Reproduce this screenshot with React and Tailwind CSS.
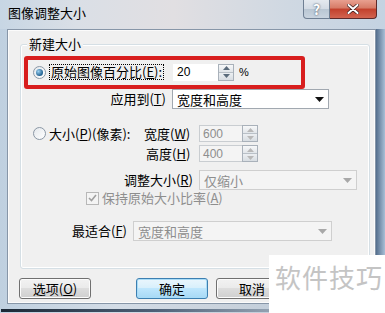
import React from "react";

const font = { fontFamily: '"Noto Sans CJK SC", "Liberation Sans", sans-serif' };

function Spinner({ disabled }) {
  const tri = disabled ? "#b8b8b8" : "#5a6a7a";
  return (
    <div className="flex h-full w-[16px] flex-col border border-[#a9b1ba] bg-[#eef0f2]">
      <div className="flex flex-1 items-center justify-center border-b border-[#b9c0c7] bg-gradient-to-b from-[#f7f8f9] to-[#e1e5e9]">
        <svg width="7" height="4" viewBox="0 0 7 4"><path d="M0 4 L3.5 0 L7 4Z" fill={tri} /></svg>
      </div>
      <div className="flex flex-1 items-center justify-center bg-gradient-to-b from-[#eceff2] to-[#d8dde2]">
        <svg width="7" height="4" viewBox="0 0 7 4"><path d="M0 0 L3.5 4 L7 0Z" fill={tri} /></svg>
      </div>
    </div>
  );
}

function Select({ value, disabled, className }) {
  return (
    <div
      className={`flex h-[20px] items-center border pl-[4px] pr-[4px] text-[13px] ${
        disabled ? "border-[#cfcfcf] bg-[#f4f4f4] text-[#8e8e8e]" : "border-[#a1a8b0] bg-white text-black"
      } ${className}`}
    >
      <span className="flex-1 leading-none">{value}</span>
      <svg width="9" height="5" viewBox="0 0 9 5">
        <path d="M0 0 L9 0 L4.5 5Z" fill={disabled ? "#a8a8a8" : "#111"} />
      </svg>
    </div>
  );
}

function Radio({ checked }) {
  return (
    <div className="flex h-[13px] w-[13px] items-center justify-center rounded-full border border-[#8a97a5] bg-gradient-to-br from-[#e4e8ec] to-[#ffffff]">
      {checked && (
        <div className="h-[7px] w-[7px] rounded-full bg-[radial-gradient(circle_at_35%_35%,#9ad0f0,#1f5f8f_70%)]" />
      )}
    </div>
  );
}

function Button({ children, primary, className }) {
  return (
    <div
      className={`flex h-[21px] w-[72px] items-center justify-center rounded-[3px] border text-[13px] text-black ${
        primary
          ? "border-[#3c7fb1] bg-[linear-gradient(#eaf6fd_0%,#d9f0fc_45%,#bee6fd_50%,#a7d9f5_100%)] shadow-[inset_0_0_0_1px_#a9dcf7]"
          : "border-[#707070] bg-[linear-gradient(#f2f2f2_0%,#ebebeb_45%,#dddddd_50%,#cfcfcf_100%)] shadow-[inset_0_0_0_1px_#fcfcfc]"
      } ${className}`}
    >
      {children}
    </div>
  );
}

export default function App() {
  return (
    <div
      style={font}
      className="relative h-[313px] w-[385px] overflow-hidden bg-[linear-gradient(90deg,#bfd0e0_0%,#d3dce6_30%,#c9d2dc_60%,#b4c6d8_92%,#3b5677_97%,#a8bfd6_100%)]"
    >
      {/* title bar */}
      <div className="flex h-[29px] items-start bg-[linear-gradient(90deg,#c7d6e4_0%,#dadfe6_20%,#e1dfe2_45%,#cfd8e2_75%,#c4d3e2_100%)]">
        <div className="pl-[8px] pt-[6px] text-[13px] leading-none text-black">图像调整大小</div>
        <div className="ml-auto mr-[8px] flex h-[19px]">
          <div className="flex w-[27px] items-center justify-center rounded-bl-[4px] border border-t-0 border-[#6f7f93] bg-[linear-gradient(#e4e9ef_0%,#d3dbe4_50%,#b9c6d3_51%,#c9d4df_100%)] text-[14px] font-bold leading-none text-white [text-shadow:0_0_2px_#2b3a4b]">
            ?
          </div>
          <div className="flex w-[47px] items-center justify-center rounded-br-[4px] border border-l-0 border-t-0 border-[#5d2a2a] bg-[linear-gradient(#e8a090_0%,#d67a66_45%,#c2402c_50%,#d26450_100%)]">
            <svg width="12" height="10" viewBox="0 0 12 10">
              <path d="M1.5 1 L10.5 9 M10.5 1 L1.5 9" stroke="#3a1a1a" strokeWidth="3.4" strokeLinecap="round" />
              <path d="M1.5 1 L10.5 9 M10.5 1 L1.5 9" stroke="#ffffff" strokeWidth="2" strokeLinecap="round" />
            </svg>
          </div>
        </div>
      </div>

      {/* client panel */}
      <div className="ml-[7px] h-[275px] w-[369px] border border-[#8796a8] bg-[#f0f0f0] shadow-[inset_0_0_0_1px_#fbfbfb]">
        {/* group box */}
        <div className="relative ml-[12px] mt-[14px] h-[225px] w-[350px] rounded-[3px] border border-[#d5dfe5] shadow-[inset_0_0_0_1px_#ffffff]">
          <div className="absolute left-[6px] top-[-8px] bg-[#f0f0f0] px-[2px] text-[13px] leading-none text-black">
            新建大小
          </div>

          {/* row 1 */}
          <div className="mt-[17px] flex h-[20px] items-center">
            <div className="ml-[12px]">
              <Radio checked />
            </div>
            <span className="ml-[3px] border border-dotted border-black px-[1px] text-[13px] leading-[14px] text-black">
              原始图像百分比(<u>E</u>):
            </span>
            <div className="ml-[9px] flex h-[17px] w-[45px] items-center bg-white pl-[4px] text-[12px] text-black" style={{ fontFamily: '"Liberation Sans", sans-serif' }}>
              20
            </div>
            <div className="h-[17px]">
              <Spinner />
            </div>
            <span className="ml-[5px] text-[11px] text-black" style={{ fontFamily: '"Liberation Sans", sans-serif' }}>%</span>
          </div>

          {/* row 2 */}
          <div className="mt-[7px] flex h-[20px] items-center">
            <span className="w-[151px] pr-[6px] text-right text-[13px] text-black">应用到(<u>T</u>)</span>
            <Select value="宽度和高度" className="w-[157px]" />
          </div>

          {/* row 3 */}
          <div className="mt-[16px] flex h-[17px] items-center">
            <div className="ml-[12px]">
              <Radio />
            </div>
            <span className="ml-[3px] w-[95px] text-[13px] text-black">大小(<u>P</u>)(像素):</span>
            <span className="w-[55px] text-[13px] text-black">宽度(<u>W</u>)</span>
            <div className="flex h-full w-[43px] items-center border border-r-0 border-[#c9cdd1] bg-[#f4f4f4] pl-[3px] text-[12px] text-[#8e8e8e]" style={{ fontFamily: '"Liberation Sans", sans-serif' }}>
              600
            </div>
            <Spinner disabled />
          </div>

          {/* row 4 */}
          <div className="mt-[3px] flex h-[17px] items-center">
            <span className="ml-[125px] w-[53px] text-[13px] text-black">高度(<u>H</u>)</span>
            <div className="flex h-full w-[43px] items-center border border-r-0 border-[#c9cdd1] bg-[#f4f4f4] pl-[3px] text-[12px] text-[#8e8e8e]" style={{ fontFamily: '"Liberation Sans", sans-serif' }}>
              400
            </div>
            <Spinner disabled />
          </div>

          {/* row 5 */}
          <div className="mt-[8px] flex h-[20px] items-center">
            <span className="w-[178px] pr-[6px] text-right text-[13px] text-black">调整大小(<u>R</u>)</span>
            <Select value="仅缩小" disabled className="w-[158px]" />
          </div>

          {/* row 6 */}
          <div className="mt-[1px] flex h-[14px] items-center">
            <div className="ml-[65px] flex h-[13px] w-[13px] items-center justify-center border border-[#b8b8b8] bg-[#f4f4f4]">
              <svg width="9" height="8" viewBox="0 0 9 8">
                <path d="M1 4 L3.5 6.5 L8 1" stroke="#a0a0a0" strokeWidth="1.6" fill="none" />
              </svg>
            </div>
            <span className="ml-[3px] text-[13px] text-[#8e8e8e]">保持原始大小比率(<u>A</u>)</span>
          </div>

          {/* row 7 */}
          <div className="mt-[16px] flex h-[20px] items-center">
            <span className="w-[112px] pr-[6px] text-right text-[13px] text-black">最适合(<u>F</u>)</span>
            <Select value="宽度和高度" disabled className="w-[199px]" />
          </div>
        </div>

        {/* buttons */}
        <div className="ml-[11px] mt-[9px] flex">
          <Button>选项(<u>O</u>)</Button>
          <Button primary className="ml-[45px]">确定</Button>
          <Button className="ml-[8px]">取消</Button>
        </div>
      </div>

      {/* bottom frame edge */}
      <div className="mx-[1px] mt-[5px] h-[3px] bg-[linear-gradient(90deg,#1b2836,#4d6077_40%,#a9b6c4_80%,#1d2a3a)]" />

      {/* red highlight annotation */}
      <div className="absolute left-[24px] top-[56px] h-[33px] w-[281px] rounded-[3px] border-[4px] border-[#d81e1e]" />

      {/* watermark */}
      <div className="absolute left-[269px] top-[255px] flex h-[58px] w-[116px] items-start bg-white pl-[6px] pt-[9px]">
        <span className="text-[26px] leading-none tracking-[1px] text-[#c4c4c4]">软件技巧</span>
      </div>
    </div>
  );
}
